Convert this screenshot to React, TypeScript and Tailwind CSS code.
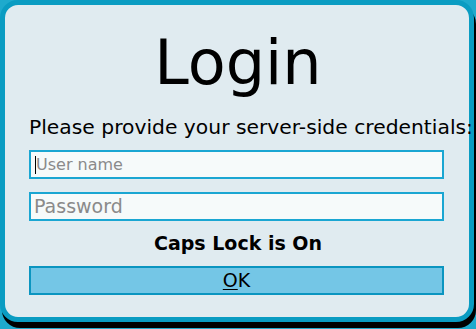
import React from "react";

export default function App() {
  return (
    <div className="w-[476px] h-[329px] overflow-hidden bg-[#1eaacd]" style={{ fontFamily: '"DejaVu Sans", sans-serif' }}>
      <div className="w-[474px] h-[322px] rounded-[18px] border-[5px] border-[#0a9cc2] bg-[#e0ebf0] shadow-[2px_6px_0_0_#000] flex flex-col">
        <div className="flex justify-center pl-[2px] pt-[27px] text-[62px] leading-[62px] text-black">Login</div>
        <div className="px-[24px] flex flex-col">
          <div className="mt-[21px] text-[20.3px] leading-[24px] text-black whitespace-nowrap">Please provide your server-side credentials:</div>
          <div className="mt-[11px] h-[29px] w-[415px] border-2 border-[#1aa6d2] bg-[#f6fafa] flex items-center px-[4px] text-[16px] text-[#8a8a8a]">
            <span className="w-px h-[18px] bg-black"></span>User name
          </div>
          <div className="mt-[13px] h-[29px] w-[415px] border-2 border-[#1aa6d2] bg-[#f6fafa] flex items-center px-[3px] text-[19px] text-[#8a8a8a]">Password</div>
          <div className="mt-[11px] h-[22px] w-[415px] flex justify-center items-center pl-[3px] text-[19px] font-bold text-black">Caps Lock is On</div>
          <div className="mt-[12px] h-[29px] w-[415px] border-2 border-[#0b95c0] bg-[#74c6e6] flex justify-center items-center text-[19px] text-black">
            <span><span className="underline underline-offset-2">O</span>K</span>
          </div>
        </div>
      </div>
    </div>
  );
}
